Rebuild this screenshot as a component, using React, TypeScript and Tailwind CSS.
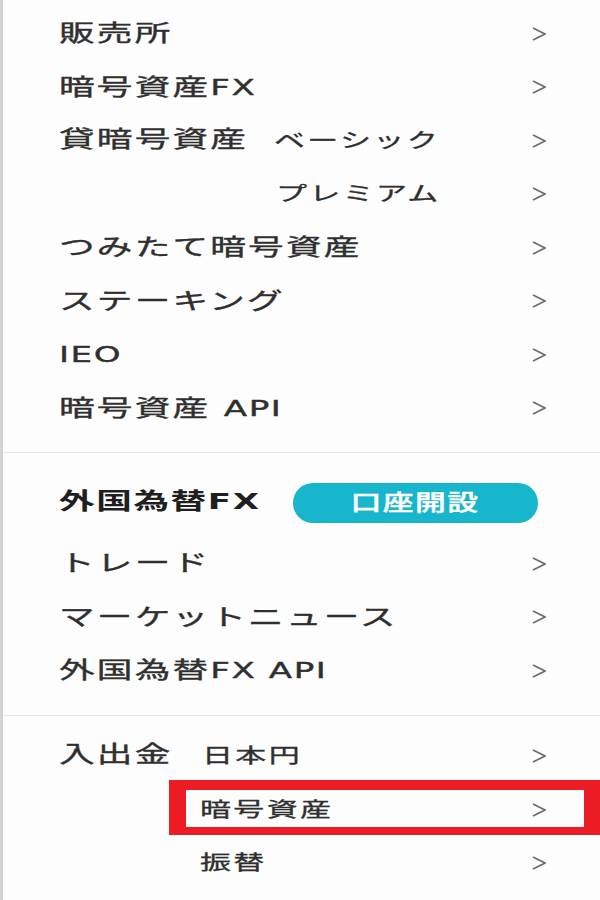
import React from 'react';

const font = { fontFamily: '"DejaVu Sans", "Noto Sans CJK JP", sans-serif' };

const Chevron = () => (
  <svg width="14" height="14" viewBox="0 0 14 14" className="shrink-0">
    <polyline points="1,1 13,7 1,13" fill="none" stroke="#6b6b6b" strokeWidth="1.6" />
  </svg>
);

const Txt = ({ children, bold }: { children: React.ReactNode; bold?: boolean }) => (
  <span
    className={
      'inline-block origin-left scale-x-[1.55] whitespace-nowrap text-[23px] leading-none ' +
      (bold
        ? 'font-bold tracking-[1px] text-[#1f1f1f]'
        : 'tracking-[1.4px] text-[#2f2f2f] [-webkit-text-stroke:0.35px_#2f2f2f]')
    }
  >
    {children}
  </span>
);

const Sub = ({ children }: { children: React.ReactNode }) => (
  <span className="inline-block origin-left scale-x-[1.55] whitespace-nowrap text-[20px] leading-none tracking-[1.5px] text-[#2f2f2f] [-webkit-text-stroke:0.3px_#2f2f2f]">
    {children}
  </span>
);

const Lat = ({ children }: { children: React.ReactNode }) => (
  <span className="text-[22px] tracking-[1px]">{children}</span>
);

const Row = ({
  label,
  sub,
  col,
  boxed,
}: {
  label?: React.ReactNode;
  sub?: React.ReactNode;
  col?: string;
  boxed?: boolean;
}) => (
  <div className="relative flex h-[53.5px] items-center pl-[56px] pr-[54px]">
    {sub !== undefined ? (
      <>
        <div className={col}>{label && <Txt>{label}</Txt>}</div>
        <Sub>{sub}</Sub>
      </>
    ) : (
      <Txt>{label}</Txt>
    )}
    <div className="ml-auto">
      <Chevron />
    </div>
    {boxed && (
      <div className="pointer-events-none absolute left-[166px] right-0 top-[-3px] bottom-[2px] border-t-[10px] border-b-[8px] border-l-[17px] border-r-[16px] border-[#ec1c24]" />
    )}
  </div>
);

export default function App() {
  return (
    <div style={font} className="min-h-[900px] w-[600px] overflow-hidden border-l-[3px] border-l-[#d2d2d2] bg-[#fdfdfd]">
      <section className="pt-[7px] pb-[17px]">
        <Row label="販売所" />
        <Row label={<>暗号資産<Lat>FX</Lat></>} />
        <Row label="貸暗号資産" sub="ベーシック" col="w-[215px]" />
        <Row label="" sub="プレミアム" col="w-[217px]" />
        <Row label="つみたて暗号資産" />
        <Row label="ステーキング" />
        <Row label={<Lat>IEO</Lat>} />
        <Row label={<>暗号資産 <Lat>API</Lat></>} />
      </section>

      <div className="border-t border-[#e8e8e8]" />

      <section className="pt-[20px] pb-[17px]">
        <div className="flex h-[60px] items-center pl-[56px]">
          <div className="w-[234px]">
            <Txt bold>
              外国為替<Lat>FX</Lat>
            </Txt>
          </div>
          <button className="flex h-[40px] w-[245px] items-center justify-center rounded-full bg-[#18b6cc]">
            <span className="inline-block scale-x-[1.4] whitespace-nowrap text-[22px] font-medium leading-none tracking-[1px] text-white [-webkit-text-stroke:0.4px_#ffffff]">
              口座開設
            </span>
          </button>
        </div>
        <div className="pt-[4px]">
          <Row label="トレード" />
          <Row label="マーケットニュース" />
          <Row label={<>外国為替<Lat>FX API</Lat></>} />
        </div>
      </section>

      <div className="border-t border-[#e8e8e8]" />

      <section className="pt-[14px]">
        <Row label="入出金" sub="日本円" col="w-[143px]" />
        <Row sub="暗号資産" col="w-[141px]" boxed />
        <Row sub="振替" col="w-[141px]" />
      </section>
    </div>
  );
}
